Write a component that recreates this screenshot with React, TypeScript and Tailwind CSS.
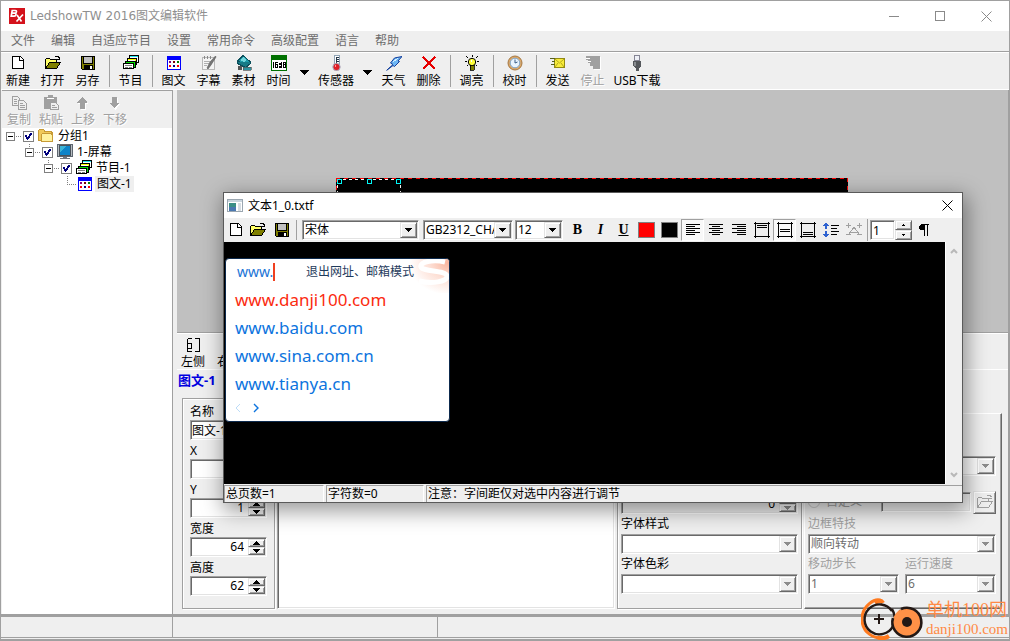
import type { ReactNode } from 'react'
import { clsx } from 'clsx'

const SUNKEN =
  'border border-t-[#a0a0a0] border-l-[#a0a0a0] border-r-white border-b-white p-px shadow-[inset_1px_1px_0_#696969,inset_-1px_-1px_0_#e3e3e3]'
const RAISED =
  'border border-t-[#e3e3e3] border-l-[#e3e3e3] border-r-[#696969] border-b-[#696969] bg-[#efefef] shadow-[inset_1px_1px_0_#fff,inset_-1px_-1px_0_#a0a0a0]'
const ETCHED = 'border border-[#a0a0a0] shadow-[inset_1px_1px_0_#fff,1px_1px_0_#fff]'

function Icon({ children, w = 16, h = 16, className }: { children: ReactNode; w?: number; h?: number; className?: string }) {
  return (
    <svg width={w} height={h} viewBox={`0 0 ${w} ${h}`} className={clsx('block shrink-0', className)} shapeRendering="crispEdges" fill="none" aria-hidden="true">
      {children}
    </svg>
  )
}

const NewIcon = () => (
  <Icon>
    <path d="M2.500 1.500h8l3 3v9h-11z" fill="#fff" stroke="#000" />
    <path d="M9.500 1.500v4h4" stroke="#000" />
  </Icon>
)

const OpenIcon = () => (
  <Icon>
    <path d="M.5 13.500v-9l1-1h3l1 1h6v3" fill="#ffff66" stroke="#000" />
    <path d="M.5 13.500l4-6h11l-4 6z" fill="#808000" stroke="#000" />
    <path d="M9.500 2.500l1-1h3l1 2M12 4.500h3M14.500 2v3" stroke="#000" />
  </Icon>
)

const SaveIcon = () => (
  <Icon>
    <path d="M1.500 1.500h13v13h-12l-1-1z" fill="#808000" stroke="#000" />
    <path d="M4 2h8v6H4z" fill="#c0c0c0" />
    <path d="M4 10h9v5H4z" fill="#000" />
    <path d="M10 11h2v3h-2z" fill="#fff" />
    <path d="M3.500 2v6.500h9V2" stroke="#000" />
  </Icon>
)

const ProgramIcon = () => (
  <Icon>
    <path d="M6 0h10v8H6z" fill="#000" />
    <path d="M7 1h8v6H7z" fill="#fff" />
    <path d="M7 1h8v1H7z" fill="#22e6f2" />
    <path d="M4 3h10v7H4z" fill="#000" />
    <path d="M5 4h8v5H5z" fill="#fff" />
    <path d="M5 4h8v1H5zM12 4h1v5h-1z" fill="#ffff00" />
    <path d="M2 6h11v7H2z" fill="#000" />
    <path d="M3 7h9v5H3z" fill="#00e000" />
    <path d="M.5 8.500h10v5H.5z" fill="#fff" stroke="#000" />
    <path d="M2 10h7v1H2zM2 12h3v1H2zM6 12h3v1H6z" fill="#808080" />
  </Icon>
)

const GraphicIcon = () => (
  <Icon>
    <path d="M1 1h14v14H1z" fill="#0000ff" />
    <path d="M2 5h12v9H2z" fill="#fff" />
    <path d="M3 6h2v2H3z" fill="#800080" />
    <path d="M7 6h2v2H7z" fill="#800000" />
    <path d="M11 6h2v2h-2z" fill="#008000" />
    <path d="M3 10h2v2H3z" fill="#ff0000" />
    <path d="M7 10h2v2H7z" fill="#000080" />
    <path d="M11 10h2v2h-2z" fill="#ff0000" />
  </Icon>
)

const CaptionIcon = () => (
  <Icon>
    <path d="M1.500 2.500h12v12h-12z" fill="#f4f4f4" stroke="#b8b8b8" />
    <path d="M3 1h1v3H3zM6 1h1v3H6zM9 1h1v3H9z" fill="#888" />
    <path d="M3 6h6v1H3zM3 8h5v1H3zM3 10h3v1H3z" fill="#b0b0b0" />
    <path d="M14.500 1L9 7l-3 6 1 1 3-4 5-8z" fill="#777" stroke="#555" strokeWidth=".6" shapeRendering="auto" />
  </Icon>
)

const MaterialIcon = () => (
  <Icon>
    <path d="M7 .5L14.500 7 10 10.500 1.500 6z" fill="#1d9aa8" stroke="#0b4f5c" />
    <path d="M7 2l4 3-3 2-4-2z" fill="#74d6dc" />
    <path d="M1.500 6.500v2l8 4 5-4V7" fill="#177a86" stroke="#0b4f5c" />
    <path d="M2 11h4v4H2z" fill="#555" />
    <path d="M7 12l8 0v3H7z" fill="#2e93a0" stroke="#555" strokeWidth=".7" />
  </Icon>
)

const TimeIcon = () => (
  <Icon>
    <path d="M0 0h16v16H0z" fill="#007000" />
    <path d="M1 5h14v10H1z" fill="#fff" />
    <path d="M2.500 7v6M4.500 7v6M4 7.500h3M4 12.500h3M6.500 10v3M4 9.500h3M8 8h1v1H8zM8 11h1v1H8zM10.500 7v6M12.500 7v6M14.500 7v6M12 7.500h3M12 9.500h3M12 12.500h3" stroke="#000" />
  </Icon>
)

const SensorIcon = () => (
  <Icon>
    <path d="M6 0h5v10H6z" fill="#fff" stroke="#8fa3b5" />
    <path d="M8 2h1v9H8z" fill="#27384a" />
    <path d="M9 2h2v1H9zM9 4h2v1H9zM9 6h2v1H9z" fill="#27384a" />
    <circle cx="8.500" cy="12" r="3.700" fill="#e01f28" stroke="#a9b7c9" shapeRendering="auto" />
    <circle cx="7.500" cy="11" r="1" fill="#ff9a9a" />
  </Icon>
)

const WeatherIcon = () => (
  <Icon>
    <path d="M.7 15.300L7 9.500 4.500 8l4-5 7.500-1.500-4 4.500 1.500.5-5 5-1.500-1z" fill="#6cb6f5" stroke="#123f9c" shapeRendering="auto" />
    <path d="M7 7l5-4" stroke="#d9f1ff" />
  </Icon>
)

const DeleteIcon = () => (
  <Icon>
    <path d="M2 2l12 12M14 2L2 14" stroke="#e60000" strokeWidth="2.400" />
  </Icon>
)

const BulbIcon = () => (
  <Icon>
    <circle cx="8" cy="7" r="3.700" fill="#ffff3a" stroke="#000" shapeRendering="auto" />
    <path d="M6 10h4v5H6z" fill="#808000" stroke="#000" strokeWidth=".8" />
    <path d="M8 0v2M2.500 1.500l2 2M13.500 1.500l-2 2M1 6.500h2M13 6.500h2M2.500 11.500l1.500-1.500M13.500 11.500L12 10" stroke="#000" />
    <path d="M7 5h1v2H7z" fill="#fff" />
  </Icon>
)

const ClockIcon = () => (
  <Icon>
    <g shapeRendering="auto">
      <circle cx="8" cy="8" r="7" fill="#dba869" stroke="#a57843" />
      <circle cx="8" cy="8" r="4.800" fill="#e8f4ff" stroke="#7fa6cc" />
      <path d="M8 4.500V8l2.500-1" stroke="#3a5d86" />
    </g>
  </Icon>
)

const SendIcon = () => (
  <Icon>
    <path d="M4.500 3.500h10v9h-10z" fill="#f8ec3a" stroke="#938a12" />
    <path d="M5 4l4.500 4L14 4M5 12l3-4M14 12l-3-4" stroke="#b5a91c" shapeRendering="auto" />
    <path d="M0 3h5v1H0zM2 6h3v1H2zM1 9h4v1H1z" fill="#56611d" />
  </Icon>
)

const StopIcon = () => (
  <Icon>
    <path d="M1 1h14v13H8v-3H5V8H3V5H1z" fill="#a0a0a0" />
    <path d="M1 3h4v1H1zM3 6h3v1H3zM15 2h1v13H9v-1h6z" fill="#fff" />
  </Icon>
)

const UsbIcon = () => (
  <Icon>
    <path d="M5.500.5h5v5h-5z" fill="#eef0f6" stroke="#858594" />
    <path d="M4 6h8v5l-2 3v2H7v-2l-3-3z" fill="#55585c" />
    <path d="M5 7h2v4H5z" fill="#8a8e92" />
  </Icon>
)

const CopyIcon = () => (
  <Icon>
    <path d="M1.500 1.500h5l2 2v7h-7z" stroke="#a0a0a0" />
    <path d="M3 4h3M3 6h3M3 8h3" stroke="#a0a0a0" />
    <path d="M7.500 5.500h5l3 3v6h-8z" fill="#efefef" stroke="#a0a0a0" />
    <path d="M9 8.500h3M9 10.500h5M9 12.500h5" stroke="#a0a0a0" />
  </Icon>
)

const PasteIcon = () => (
  <Icon>
    <path d="M1 2h4V0h5v2h4v12H1z" fill="#a0a0a0" />
    <path d="M4 3h7v1H4z" fill="#fff" />
    <path d="M7.500 7.500h5l3 3v4h-8z" fill="#efefef" stroke="#a0a0a0" />
    <path d="M9 10.500h3M9 12.500h5" stroke="#a0a0a0" />
  </Icon>
)

const UpIcon = () => (
  <Icon>
    <path d="M8 3l5 6h-2v6H6V9H3z" fill="#fff" />
    <path d="M7.500 1.500l5 6H10v6H5v-6H2.500z" fill="#a0a0a0" />
  </Icon>
)

const DownIcon = () => (
  <Icon>
    <path d="M6 3h5v6h2l-4.500 6L4 9h2z" fill="#fff" />
    <path d="M5 1.500h5v6h2.500l-5 6-5-6H5z" fill="#a0a0a0" />
  </Icon>
)

const FolderIcon = () => (
  <Icon>
    <path d="M.5 12.500v-10l1-1h4l1.500 2h6l1 1v8z" fill="#f0c95a" stroke="#c79a35" />
    <path d="M3.500 13.500v-7l1-1h9l.5 1v7z" fill="#fff2a0" stroke="#c79a35" />
  </Icon>
)

const MonitorIcon = () => (
  <Icon>
    <path d="M.5.500h15v12H.5z" fill="#b6bcc2" stroke="#5f6770" />
    <path d="M3 2h10v9H3z" fill="#0d84c9" />
    <path d="M3 2h6L3 9z" fill="#39b4d8" />
    <path d="M2.500 1.500h11v10h-11z" stroke="#4a525a" />
    <path d="M6 13h4v1H6zM3 14h10v1H3z" fill="#6f7780" />
  </Icon>
)

const SideLeftIcon = () => (
  <Icon>
    <path d="M2.500 14.500v-13M2.500 1.500h4M2.500 6.500h4v5h-4M2.500 14.500h4M10 1.500h4.500v13H10" stroke="#000" />
  </Icon>
)

function AlignIcon({ kind }: { kind: 'left' | 'center' | 'right' }) {
  const d = {
    left: 'M1 2.500h14M1 4.500h9M1 6.500h14M1 8.500h9M1 10.500h14M1 12.500h9',
    center: 'M1 2.500h14M4 4.500h8M1 6.500h14M4 8.500h8M1 10.500h14M4 12.500h8',
    right: 'M1 2.500h14M6 4.500h9M1 6.500h14M6 8.500h9M1 10.500h14M6 12.500h9',
  }[kind]
  return (
    <Icon>
      <path d={d} stroke="#000" />
    </Icon>
  )
}

function VAlignIcon({ kind }: { kind: 'top' | 'middle' | 'bottom' }) {
  const d = { top: 'M3 3.500h10M3 5.500h10', middle: 'M3 7.500h10M3 9.500h10', bottom: 'M3 10.500h10M3 12.500h10' }[kind]
  return (
    <Icon>
      <path d="M0 1.500h16M0 14.500h16M1.500 0v16M14.500 0v16" stroke="#000" />
      <path d={d} stroke="#000" />
    </Icon>
  )
}

const LineSpacingIcon = () => (
  <Icon>
    <path d="M3 0l3 4H4v3H2V4H0zM3 16l3-4H4V9H2v3H0z" fill="#2f62d0" />
    <path d="M8 3.500h8M8 6.500h6M8 9.500h8M8 12.500h6" stroke="#000" />
  </Icon>
)

const KerningIcon = () => (
  <Icon>
    <path d="M3 12L8 5l5 7M5 10.500h6M0 12.500h5M11 12.500h5" stroke="#a0a0a0" />
    <path d="M0 3.500h5M2.500 1v5M11 3.500h5M13.500 1v5" stroke="#a0a0a0" />
  </Icon>
)

function Triangle({ up, disabled }: { up?: boolean; disabled?: boolean }) {
  return (
    <Icon w={7} h={4}>
      <path d={up ? 'M3 0h1v1h1v1h1v1h1v1H0V3h1V2h1V1h1z' : 'M0 0h7v1H6v1H5v1H4v1H3V3H2V2H1V1H0z'} fill={disabled ? '#8c8c8c' : '#000'} />
    </Icon>
  )
}

interface ComboProps {
  label: string
  value?: string
  disabled?: boolean
  greyArrow?: boolean
  className?: string
}

function Combo({ label, value = '', disabled, greyArrow, className }: ComboProps) {
  return (
    <div className={clsx('relative h-5 bg-white', SUNKEN, className)}>
      <select aria-label={label} disabled={disabled} className={clsx('block h-4 w-full appearance-none overflow-hidden pr-[17px] pl-px text-xs leading-4 text-clip whitespace-nowrap opacity-100 outline-none', disabled ? 'text-[#6d6d6d]' : 'text-black')}>
        <option>{value}</option>
      </select>
      <span className={clsx('pointer-events-none absolute inset-y-px right-px flex w-[17px] items-center justify-center', RAISED)}>
        <Triangle disabled={disabled || greyArrow} />
      </span>
    </div>
  )
}

function Spin({ label, value, disabled }: { label: string; value: string; disabled?: boolean }) {
  return (
    <div className={clsx('flex h-5', disabled ? 'bg-[#efefef]' : 'bg-white', SUNKEN)}>
      <input aria-label={label} defaultValue={value} disabled={disabled} className="w-0 min-w-0 flex-1 pr-1 text-right text-xs leading-4 outline-none" />
      <div className="flex w-[17px] flex-col">
        <button aria-label={`${label} +`} className={clsx('flex min-h-0 flex-1 items-center justify-center', RAISED)}>
          <Triangle up disabled={disabled} />
        </button>
        <button aria-label={`${label} -`} className={clsx('flex min-h-0 flex-1 items-center justify-center', RAISED)}>
          <Triangle disabled={disabled} />
        </button>
      </div>
    </div>
  )
}

const MENUS = ['文件', '编辑', '自适应节目', '设置', '常用命令', '高级配置', '语言', '帮助']

type Tool = { label: string; icon: ReactNode; width?: string; disabled?: boolean } | 'sep' | 'arrow'

const TOOLS: Tool[] = [
  { label: '新建', icon: <NewIcon />, width: 'w-[34px]' },
  { label: '打开', icon: <OpenIcon /> },
  { label: '另存', icon: <SaveIcon /> },
  'sep',
  { label: '节目', icon: <ProgramIcon /> },
  'sep',
  { label: '图文', icon: <GraphicIcon /> },
  { label: '字幕', icon: <CaptionIcon /> },
  { label: '素材', icon: <MaterialIcon /> },
  { label: '时间', icon: <TimeIcon /> },
  'arrow',
  { label: '传感器', icon: <SensorIcon />, width: 'w-[46px]' },
  'arrow',
  { label: '天气', icon: <WeatherIcon /> },
  { label: '删除', icon: <DeleteIcon /> },
  'sep',
  { label: '调亮', icon: <BulbIcon /> },
  'sep',
  { label: '校时', icon: <ClockIcon /> },
  'sep',
  { label: '发送', icon: <SendIcon /> },
  { label: '停止', icon: <StopIcon />, disabled: true },
  { label: 'USB下载', icon: <UsbIcon />, width: 'w-[54px]' },
]

function TitleBar() {
  return (
    <header className="flex h-[30px] items-center bg-white pl-2">
      <Icon>
        <path d="M0 0h16v16H0z" fill="#d4121c" />
        <g shapeRendering="auto" stroke="#fff" strokeWidth="1.700">
          <path d="M3.200 2.500h3c2 0 1.500 2.600-.4 2.600H3.500 5.600c2.200 0 1.700 3-.5 3H2.200z" />
          <path d="M8 7l4.500 6.500M14 6.500l-6.500 7" />
        </g>
      </Icon>
      <h1 className="flex-1 pl-[5px] text-xs text-[#8f8f8f]">
        <span className="font-['DejaVu_Sans']">LedshowTW 2016</span>图文编辑软件
      </h1>
      {['最小化', '最大化', '关闭'].map((name, i) => (
        <button key={name} aria-label={name} className="flex h-full w-[46px] items-center justify-center">
          <Icon w={11} h={11}>
            {i === 0 && <path d="M0 5.500h10" stroke="#8a8a8a" />}
            {i === 1 && <path d="M.5.500h9v9h-9z" stroke="#8a8a8a" />}
            {i === 2 && <path d="M.5.500l10 10M10.500.500l-10 10" stroke="#8a8a8a" shapeRendering="auto" />}
          </Icon>
        </button>
      ))}
    </header>
  )
}

function MainToolbar() {
  return (
    <div className="flex h-[37px] border-b border-white pt-[2px]" role="toolbar">
      {TOOLS.map((tool, i) => {
        if (tool === 'sep')
          return (
            <span key={i} className="flex w-2 justify-center">
              <span className="h-8 w-px bg-[#a0a0a0]" />
            </span>
          )
        if (tool === 'arrow')
          return (
            <button key={i} aria-label="更多" className="flex w-[17px] items-center justify-center">
              <Icon w={9} h={5}>
                <path d="M0 0h9v1H8v1H7v1H6v1H5v1H4V4H3V3H2V2H1V1H0z" fill="#000" />
              </Icon>
            </button>
          )
        return (
          <button key={i} disabled={tool.disabled} className={clsx('flex flex-col items-center gap-0.5 whitespace-nowrap leading-4', tool.width ?? 'w-[35px]', tool.disabled && 'text-[#a0a0a0] [text-shadow:1px_1px_0_#fff]')}>
            {tool.icon}
            {tool.label}
          </button>
        )
      })}
    </div>
  )
}

const TREE = [
  { label: '分组1', icon: <FolderIcon />, indent: 'pl-[3px]' },
  { label: '1-屏幕', icon: <MonitorIcon />, indent: 'pl-[22px]' },
  { label: '节目-1', icon: <ProgramIcon />, indent: 'pl-[41px]' },
]

function TreePanel() {
  return (
    <aside className="flex w-[171px] shrink-0 flex-col border-t border-r border-[#a0a0a0] bg-white">
      <div className="flex h-[37px] gap-2 bg-[#efefef] pt-1 pl-[5px] text-[#a0a0a0]">
        {[
          { label: '复制', icon: <CopyIcon /> },
          { label: '粘贴', icon: <PasteIcon /> },
          { label: '上移', icon: <UpIcon /> },
          { label: '下移', icon: <DownIcon /> },
        ].map((b) => (
          <button key={b.label} disabled className="flex w-6 flex-col items-center gap-px leading-4 [text-shadow:1px_1px_0_#fff]">
            {b.icon}
            {b.label}
          </button>
        ))}
      </div>
      <ul className="leading-4">
        {TREE.map((node, i) => (
          <li key={node.label}>
            <label className={clsx('flex h-4 items-center', node.indent)}>
              <Icon w={18} h={16}>
                {i > 0 && <path d="M5.500 0v3" stroke="#808080" strokeDasharray="1 1" />}
                <path d="M1.500 4.500h8v8h-8z" fill="#fff" stroke="#808080" />
                <path d="M3 8.500h5" stroke="#000" />
                <path d="M11 8.500h6" stroke="#808080" strokeDasharray="1 1" />
              </Icon>
              <span className="relative flex">
                <input type="checkbox" defaultChecked className="h-[11px] w-[11px] appearance-none border border-[#808080] bg-white" />
                <Icon w={11} h={11} className="pointer-events-none absolute inset-0">
                  <path d="M2.500 4.500l2 3 4-5" stroke="#00007c" strokeWidth="2" />
                </Icon>
              </span>
              <span className="pr-1 pl-1">{node.icon}</span>
              {node.label}
            </label>
          </li>
        ))}
        <li className="flex h-4 items-center pl-[63px]">
          <Icon w={12} h={16}>
            <path d="M2.500 0v8.500h10" stroke="#808080" strokeDasharray="1 1" />
          </Icon>
          <GraphicIcon />
          <span className="ml-0.5 bg-[#efefef] px-0.5">图文-1</span>
        </li>
      </ul>
    </aside>
  )
}

function LedCanvas() {
  return (
    <div className="flex flex-1 items-start justify-center border-b border-[#a0a0a0] bg-[#c0c0c0] pt-[88px] pr-px">
      <svg width="512" height="64" className="block bg-black" shapeRendering="crispEdges" fill="none" role="img" aria-label="屏幕">
        <path d="M0 0.500h512M0.500 0v64M511.500 0v64M0 63.500h512" stroke="#ff0000" strokeDasharray="4 4" />
        <path d="M1 1.500h64M1.500 1v62M64.500 1v62M1 62.500h64" stroke="#fff" strokeDasharray="3 3" />
        {[1, 31, 60].map((x) => (
          <rect key={x} x={x + 0.5} y="1.500" width="4" height="4" fill="#000" stroke="#00ffff" />
        ))}
      </svg>
    </div>
  )
}

const POSITION_FIELDS = [
  { label: 'X', value: '1' },
  { label: 'Y', value: '1' },
  { label: '宽度', value: '64' },
  { label: '高度', value: '62' },
]

function PropertyPanel() {
  return (
    <section className="flex flex-col border-t border-white pb-[5px]">
      <div className="flex h-9 gap-3 border-b border-white pt-[3px] pl-1">
        {['左侧', '右侧'].map((side) => (
          <button key={side} className="flex w-6 flex-col items-center gap-px leading-4">
            <SideLeftIcon />
            {side}
          </button>
        ))}
      </div>
      <h2 className="h-7 px-px text-[13px] leading-5 font-bold text-[#0000e0]">图文-1</h2>

      <div className="flex gap-0.5 pr-1.5 pl-[5px]">
        <div className={clsx('w-[93px] shrink-0 px-[7px] pt-0.5 pb-3', ETCHED)}>
          <label className="block pt-[3px] leading-4">
            名称
            <input defaultValue="图文-1" className={clsx('block h-5 w-full bg-white text-xs', SUNKEN)} />
          </label>
          {POSITION_FIELDS.map((f) => (
            <div key={f.label}>
              <span className="block pt-[3px] leading-4">{f.label}</span>
              <Spin label={f.label} value={f.value} />
            </div>
          ))}
        </div>

        <textarea aria-label="内容" className={clsx('min-w-0 flex-1 resize-none bg-white', SUNKEN)} />

        <div className={clsx('flex w-[185px] shrink-0 flex-col justify-end px-[3px] pb-3.5', ETCHED)}>
          <Spin label="间距" value="0" disabled />
          <span className="leading-5">字体样式</span>
          <Combo label="字体样式" greyArrow />
          <span className="leading-5">字体色彩</span>
          <Combo label="字体色彩" greyArrow />
        </div>

        <div className="mt-[15px] flex w-[198px] shrink-0 flex-col justify-end border border-t-white border-r-[#696969] border-b-[#696969] border-l-white pr-[5px] pb-3.5 pl-[3px] text-[#a0a0a0] shadow-[inset_-1px_-1px_0_#a0a0a0]">
          <Combo label="边框" disabled />
          <div className="mt-3.5 flex h-6 items-center gap-0.5">
            <label className="flex flex-1 items-center gap-1.5">
              <input type="radio" disabled className="h-3 w-3" />
              自定义
            </label>
            <input aria-label="自定义边框" disabled className={clsx('h-5 w-[90px]', SUNKEN)} />
            <button aria-label="浏览" disabled className={clsx('flex h-[23px] w-[23px] items-center justify-center', RAISED)}>
              <Icon>
                <path d="M.5 13.500v-9l1-1h3l1 1h6v3M.5 13.500l4-6h11l-4 6zM9.500 2.500l1-1h3l1 2M12 4.500h3" stroke="#a0a0a0" />
              </Icon>
            </button>
          </div>
          <span className="leading-5">边框特技</span>
          <Combo label="边框特技" value="顺向转动" disabled />
          <div className="flex gap-1.5">
            <div className="flex-1">
              <span className="block leading-5">移动步长</span>
              <Combo label="移动步长" value="1" disabled />
            </div>
            <div className="flex-1">
              <span className="block leading-5">运行速度</span>
              <Combo label="运行速度" value="6" disabled />
            </div>
          </div>
        </div>
      </div>
    </section>
  )
}

function ToolButton({ label, pressed, children }: { label: string; pressed?: boolean; children: ReactNode }) {
  return (
    <button
      aria-label={label}
      aria-pressed={pressed}
      className={clsx(
        'flex h-[22px] w-[23px] shrink-0 items-center justify-center border font-["Liberation_Serif",serif] text-sm font-bold',
        pressed ? 'border-t-[#a0a0a0] border-l-[#a0a0a0] border-r-white border-b-white bg-[#f8f8f8]' : 'border-transparent',
      )}
    >
      {children}
    </button>
  )
}

function EditorToolbar() {
  return (
    <div className="flex h-6 items-center bg-[#efefef]" role="toolbar">
      <button aria-label="新建" className="w-6 pl-1"><NewIcon /></button>
      <button aria-label="打开" className="w-6 pl-0.5"><OpenIcon /></button>
      <button aria-label="保存" className="w-6 pl-0.5"><SaveIcon /></button>
      <span className="mr-[5px] h-5 w-px bg-[#a0a0a0]" />
      <Combo label="字体" value="宋体" className="w-[117px]" />
      <Combo label="字符集" value="GB2312_CHARSET" className="ml-1 w-[90px]" />
      <Combo label="字号" value="12" className="mr-[3px] ml-0.5 w-12" />
      <ToolButton label="加粗">B</ToolButton>
      <ToolButton label="斜体"><i>I</i></ToolButton>
      <ToolButton label="下划线"><u>U</u></ToolButton>
      <ToolButton label="文字颜色"><span className="h-4 w-[17px] border border-[#808080] bg-[#ff0000]" /></ToolButton>
      <ToolButton label="背景颜色"><span className="h-4 w-[17px] border border-[#808080] bg-black" /></ToolButton>
      <ToolButton label="左对齐" pressed><AlignIcon kind="left" /></ToolButton>
      <ToolButton label="居中"><AlignIcon kind="center" /></ToolButton>
      <ToolButton label="右对齐"><AlignIcon kind="right" /></ToolButton>
      <ToolButton label="上对齐"><VAlignIcon kind="top" /></ToolButton>
      <ToolButton label="垂直居中" pressed><VAlignIcon kind="middle" /></ToolButton>
      <ToolButton label="下对齐"><VAlignIcon kind="bottom" /></ToolButton>
      <ToolButton label="行间距"><LineSpacingIcon /></ToolButton>
      <ToolButton label="字间距"><KerningIcon /></ToolButton>
      <span className="mx-0.5 h-[22px] w-px bg-[#a0a0a0]" />
      <input aria-label="间距值" defaultValue="1" className={clsx('h-5 w-[25px] bg-white pl-0.5 text-xs', SUNKEN)} />
      <div className="flex h-5 w-[17px] flex-col">
        <button aria-label="增加" className={clsx('flex min-h-0 flex-1 items-center justify-center', RAISED)}>
          <Icon w={3} h={2}><path d="M1 0h1v1h1v1H0V1h1z" fill="#000" /></Icon>
        </button>
        <button aria-label="减少" className={clsx('flex min-h-0 flex-1 items-center justify-center', RAISED)}>
          <Icon w={3} h={2}><path d="M0 0h3v1H2v1H1V1H0z" fill="#000" /></Icon>
        </button>
      </div>
      <ToolButton label="段落">
        <Icon>
          <path d="M5 2h8v1H5zM8 2h1v12H8zM11 2h1v12h-1zM4 3h5v5H4zM3 4h2v3H3z" fill="#000" />
        </Icon>
      </ToolButton>
    </div>
  )
}

const SITES = ['www.danji100.com', 'www.baidu.com', 'www.sina.com.cn', 'www.tianya.cn']

function ImePopup() {
  return (
    <div className="absolute top-4 left-px w-[225px] overflow-hidden rounded-sm border border-[#0d2a4d] bg-white px-[9px] pb-[3px]">
      <svg width="42" height="34" viewBox="0 0 42 34" className="absolute top-0 right-0" fill="none" aria-hidden="true">
        <defs>
          <radialGradient id="glow" cx="1" cy=".1" r=".95">
            <stop offset="0" stopColor="#f9b39b" />
            <stop offset=".5" stopColor="#fde0d6" />
            <stop offset="1" stopColor="#fff" />
          </radialGradient>
        </defs>
        <path d="M0 0h42v34H0z" fill="url(#glow)" />
        <path d="M38 3C26 0 12 3 14 8s25 3 26 9-16 8-28 5" stroke="#fff" strokeWidth="5" />
      </svg>
      <div className="relative flex h-[26px] items-center text-[#1f3b5c]">
        <span className="w-10 border-r-2 border-[#f04020] pl-0.5 text-sm leading-[18px] text-[#1a74d6]">www.</span>
        <span className="pl-[31px] text-xs">退出网址、邮箱模式</span>
      </div>
      <ol className="pt-px text-[17px] leading-7">
        {SITES.map((site, i) => (
          <li key={site}>
            <a href={`http://${site}`} className={i === 0 ? 'text-[#fb2b10]' : 'text-[#0d74de]'}>{site}</a>
          </li>
        ))}
      </ol>
      <div className="flex h-5 items-center gap-3">
        <Icon w={6} h={10}><path d="M5 1L1 5l4 4" stroke="#bcdcf8" shapeRendering="auto" /></Icon>
        <Icon w={6} h={10}><path d="M1 1l4 4-4 4" stroke="#0d74de" strokeWidth="1.400" shapeRendering="auto" /></Icon>
      </div>
    </div>
  )
}

function TextEditorWindow() {
  return (
    <div role="dialog" aria-label="文本1_0.txtf" className="absolute top-[191px] left-[222px] flex h-[311px] w-[740px] flex-col border border-[#5a5a5a] bg-[#efefef] shadow-[2px_6px_20px_2px_rgba(0,0,0,0.4)]">
      <div className="flex h-[25px] items-center bg-white pl-[3px]">
        <Icon>
          <path d="M.5 1.500h15v12H.5z" fill="#fff" stroke="#9aa6b0" />
          <path d="M1 2h14v2H1z" fill="#c9d5de" />
          <path d="M2 5h7v8H2z" fill="#3b8f86" />
          <path d="M2 9h7v4H2z" fill="#4a78b0" />
          <path d="M11 5h3v8h-3z" fill="#d6dde3" />
        </Icon>
        <span className="flex-1 pl-[5px]">文本1_0.txtf</span>
        <button aria-label="关闭" className="flex h-full w-[30px] items-center justify-center">
          <Icon w={11} h={11}><path d="M.5.500l10 10M10.500.500l-10 10" stroke="#000" shapeRendering="auto" /></Icon>
        </button>
      </div>
      <EditorToolbar />
      <div className="relative flex min-h-0 flex-1">
        <div className="flex-1 bg-black" />
        <div className="flex w-[17px] flex-col items-center justify-between border-l border-white bg-[#efefef] py-1.5">
          <Icon w={8} h={6}><path d="M1 5l3-3 3 3" stroke="#b8b8b8" strokeWidth="2" shapeRendering="auto" /></Icon>
          <Icon w={8} h={6}><path d="M1 1l3 3 3-3" stroke="#b8b8b8" strokeWidth="2" shapeRendering="auto" /></Icon>
        </div>
        <ImePopup />
      </div>
      <footer className="flex h-[18px] gap-0.5 pt-px leading-4">
        <span className="w-[100px] border-t border-r border-l border-t-[#a0a0a0] border-r-white border-l-[#a0a0a0] pl-px">总页数=1</span>
        <span className="w-[98px] border-t border-r border-l border-t-[#a0a0a0] border-r-white border-l-[#a0a0a0] pl-px">字符数=0</span>
        <span className="flex-1 border-t border-l border-[#a0a0a0] pl-px">注意：字间距仅对选中内容进行调节</span>
      </footer>
    </div>
  )
}

function Watermark() {
  return (
    <div className="absolute right-px bottom-0 flex items-center text-[#ff8a45]">
      <svg width="64" height="42" viewBox="0 0 64 42" fill="none" aria-hidden="true">
        <path d="M21 3C14-1 1 8 1 21s12 22 26 18" stroke="#ff7a1f" strokeWidth="3" />
        <path d="M14 5q6-4 8 0M16 39q6 3 12-1" stroke="#ff7a1f" strokeWidth="4" />
        <path d="M31 13a15 15 0 1 0 1 15l3-8q2-5 5-8M31 11q2 3 3 9" stroke="#231815" strokeWidth="2.400" />
        <path d="M18 16v10M13 21h10" stroke="#231815" strokeWidth="2" />
        <circle cx="46" cy="24" r="14" fill="#ff9147" />
        <path d="M40 11a14.500 14.500 0 1 1-8 9" stroke="#231815" strokeWidth="2.600" />
        <circle cx="46" cy="24" r="5" fill="#231815" />
      </svg>
      <div className="pl-px font-['Liberation_Serif','Noto_Sans_CJK_SC',serif]">
        <p className="text-lg leading-5">单机100网</p>
        <p className="text-[15px] leading-[18px]">danji100.com</p>
      </div>
    </div>
  )
}

export default function App() {
  return (
    <div className="relative flex min-h-screen flex-col overflow-hidden border border-[#a0a0a0] bg-[#efefef] font-['Noto_Sans','Noto_Sans_CJK_SC',sans-serif] text-xs text-black">
      <TitleBar />
      <nav className="flex h-[21px] items-center gap-4 border-b border-[#a0a0a0] pl-2.5 text-[#6d6d6d]">
        {MENUS.map((m) => (
          <button key={m} className="leading-5">{m}</button>
        ))}
      </nav>
      <div className="h-px bg-white" />
      <MainToolbar />
      <main className="flex flex-1 pl-px">
        <TreePanel />
        <div className="flex min-w-0 flex-1 flex-col border-r border-[#a0a0a0] pl-1">
          <LedCanvas />
          <PropertyPanel />
        </div>
      </main>
      <footer className="flex h-[26px] border-t-3 border-b border-t-[#a0a0a0] border-b-[#a0a0a0] pb-px">
        <span className="w-[172px] border-r border-b border-[#a0a0a0]" />
        <span className="w-[265px] border-r border-b border-[#a0a0a0]" />
        <span className="flex-1 border-b border-[#a0a0a0]" />
      </footer>
      <TextEditorWindow />
      <Watermark />
    </div>
  )
}
